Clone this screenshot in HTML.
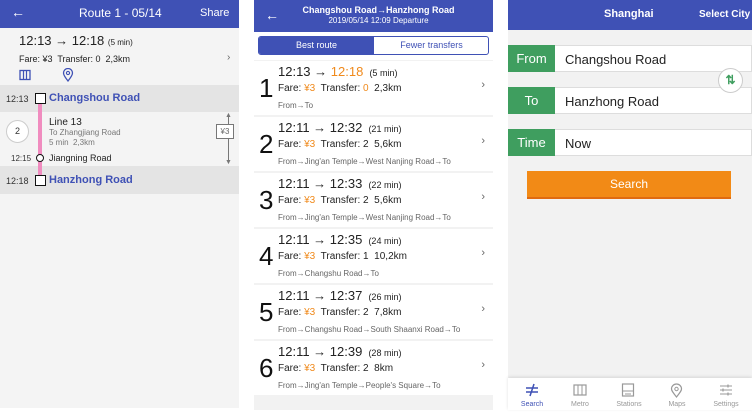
<!DOCTYPE html>
<html><head><meta charset="utf-8"><style>
*{margin:0;padding:0;box-sizing:border-box}
body{width:752px;height:414px;background:#fff;font-family:"Liberation Sans",sans-serif;position:relative;overflow:hidden;color:#222}
.a{position:absolute}
.hdr{background:#3f51b5;color:#fff}
.it{position:absolute;left:254px;width:239px;height:54px;background:#fff}
.it .n{position:absolute;left:5px;top:12px;font-size:26px;color:#111}
.it .t{position:absolute;left:24px;top:3px;font-size:13px;color:#222}
.it .t small{font-size:9px}
.it .f{position:absolute;left:24px;top:22px;font-size:10px}
.it .p{position:absolute;left:24px;top:40px;font-size:8px;color:#666}
.it .c{position:absolute;right:8px;top:18px;font-size:11px;color:#666}
.o{color:#f08a1c}
.fld{position:absolute;left:508px;width:244px;height:27px;background:#fff;border:1px solid #ddd;border-left:none}
.fld .lb{position:absolute;left:0;top:-1px;width:47px;height:27px;background:#3f9e5f;color:#fff;font-size:13px;text-align:center;line-height:27px}
.fld .v{position:absolute;left:57px;top:6px;font-size:13px}
.nav{position:absolute;top:401px;font-size:7px;color:#999;text-align:center;width:48px}
</style></head><body>
<!-- LEFT -->
<div class="a" style="left:0;top:0;width:239px;height:408px;background:#f4f4f4"></div>
<div class="a hdr" style="left:0;top:0;width:239px;height:28px"></div>
<div class="a" style="left:11px;top:4px;color:#fff;font-size:14px">←</div>
<div class="a" style="left:79px;top:6px;color:#fff;font-size:12px">Route 1 - 05/14</div>
<div class="a" style="left:200px;top:7px;color:#fff;font-size:11px">Share</div>
<div class="a" style="left:19px;top:33px;font-size:13px">12:13 → 12:18 <span style="font-size:8px">(5 min)</span></div>
<div class="a" style="left:19px;top:54px;font-size:9px">Fare: ¥3&nbsp; Transfer: 0&nbsp; 2,3km</div>
<div class="a" style="left:227px;top:52px;font-size:10px;color:#666">›</div>
<svg class="a" style="left:19px;top:69px" width="12" height="12" viewBox="0 0 12 12"><rect x="1" y="1.5" width="10" height="9" fill="none" stroke="#3f51b5" stroke-width="1.3"/><path d="M4.5 1.5v9M7.5 1.5v9" stroke="#3f51b5" stroke-width="1.2"/></svg>
<svg class="a" style="left:62px;top:68px" width="12" height="14" viewBox="0 0 12 14"><path d="M6 13C2 8 1.5 6.5 1.5 5a4.5 4.5 0 0 1 9 0c0 1.5-.5 3-4.5 8z" fill="none" stroke="#3f51b5" stroke-width="1.3"/><circle cx="6" cy="5" r="1.6" fill="none" stroke="#3f51b5" stroke-width="1.1"/></svg>
<div class="a" style="left:0;top:85px;width:239px;height:27px;background:#e4e4e4"></div>
<div class="a" style="left:0;top:166px;width:239px;height:28px;background:#e4e4e4"></div>
<div class="a" style="left:38px;top:99px;width:4px;height:82px;background:#f08cbf"></div>
<div class="a" style="left:6px;top:94px;font-size:9px;color:#333">12:13</div>
<div class="a" style="left:35px;top:93px;width:11px;height:11px;border:1.5px solid #111;background:#fff"></div>
<div class="a" style="left:49px;top:92px;font-size:11px;font-weight:bold;color:#3f51b5">Changshou Road</div>
<div class="a" style="left:6px;top:120px;width:23px;height:23px;border-radius:50%;border:1px solid #ccc;background:#fff;font-size:9px;text-align:center;line-height:21px;color:#333">2</div>
<div class="a" style="left:49px;top:117px;font-size:10px">Line 13</div>
<div class="a" style="left:49px;top:128px;font-size:8px;color:#777">To Zhangjiang Road</div>
<div class="a" style="left:49px;top:138px;font-size:8px;color:#777">5 min&nbsp; 2,3km</div>
<div class="a" style="left:11px;top:154px;font-size:8px;color:#333">12:15</div>
<div class="a" style="left:36px;top:154px;width:8px;height:8px;border-radius:50%;border:1.5px solid #111;background:#fff"></div>
<div class="a" style="left:49px;top:153px;font-size:9px">Jiangning Road</div>
<div class="a" style="left:6px;top:176px;font-size:9px;color:#333">12:18</div>
<div class="a" style="left:35px;top:175px;width:11px;height:11px;border:1.5px solid #111;background:#fff"></div>
<div class="a" style="left:49px;top:174px;font-size:11px;font-weight:bold;color:#3f51b5">Hanzhong Road</div>
<div class="a" style="left:228px;top:116px;width:1px;height:46px;background:#777"></div>
<div class="a" style="left:225px;top:112px;font-size:7px;color:#777">▲</div>
<div class="a" style="left:225px;top:159px;font-size:7px;color:#777">▼</div>
<div class="a" style="left:216px;top:124px;width:18px;height:15px;border:1px solid #777;background:#fff;font-size:8px;color:#666;text-align:center;line-height:13px">¥3</div>

<!-- MIDDLE -->
<div class="a" style="left:254px;top:0;width:239px;height:410px;background:#f2f2f2"></div>
<div class="a hdr" style="left:254px;top:0;width:239px;height:32px"></div>
<div class="a" style="left:265px;top:7px;color:#fff;font-size:14px">←</div>
<div class="a" style="left:254px;width:239px;top:5px;color:#fff;font-size:9px;text-align:center;padding-left:10px;font-weight:bold">Changshou Road→Hanzhong Road</div>
<div class="a" style="left:254px;width:239px;top:16px;color:#fff;font-size:8px;text-align:center;padding-left:10px">2019/05/14 12:09 Departure</div>
<div class="a" style="left:254px;top:32px;width:239px;height:28px;background:#fff"></div>
<div class="a" style="left:258px;top:36px;width:231px;height:19px;border:1.5px solid #3f51b5;border-radius:3px;background:#fff;overflow:hidden">
<div class="a" style="left:0;top:0;width:115px;height:17px;background:#3f51b5;color:#fff;font-size:9px;text-align:center;line-height:17px">Best route</div>
<div class="a" style="left:115px;top:0;width:115px;height:17px;color:#3f51b5;font-size:9px;text-align:center;line-height:17px">Fewer transfers</div></div>

<div class="it" style="top:61px"><div class="n">1</div><div class="t">12:13 → <span class="o">12:18</span> <small>&nbsp;(5 min)</small></div><div class="f">Fare: <span class="o">¥3</span>&nbsp; Transfer: <span class="o">0</span>&nbsp; 2,3km</div><div class="p">From→To</div><div class="c">›</div></div>
<div class="it" style="top:117px"><div class="n">2</div><div class="t">12:11 → 12:32 <small>&nbsp;(21 min)</small></div><div class="f">Fare: <span class="o">¥3</span>&nbsp; Transfer: 2&nbsp; 5,6km</div><div class="p">From→Jing'an Temple→West Nanjing Road→To</div><div class="c">›</div></div>
<div class="it" style="top:173px"><div class="n">3</div><div class="t">12:11 → 12:33 <small>&nbsp;(22 min)</small></div><div class="f">Fare: <span class="o">¥3</span>&nbsp; Transfer: 2&nbsp; 5,6km</div><div class="p">From→Jing'an Temple→West Nanjing Road→To</div><div class="c">›</div></div>
<div class="it" style="top:229px"><div class="n">4</div><div class="t">12:11 → 12:35 <small>&nbsp;(24 min)</small></div><div class="f">Fare: <span class="o">¥3</span>&nbsp; Transfer: 1&nbsp; 10,2km</div><div class="p">From→Changshu Road→To</div><div class="c">›</div></div>
<div class="it" style="top:285px"><div class="n">5</div><div class="t">12:11 → 12:37 <small>&nbsp;(26 min)</small></div><div class="f">Fare: <span class="o">¥3</span>&nbsp; Transfer: 2&nbsp; 7,8km</div><div class="p">From→Changshu Road→South Shaanxi Road→To</div><div class="c">›</div></div>
<div class="it" style="top:341px"><div class="n">6</div><div class="t">12:11 → 12:39 <small>&nbsp;(28 min)</small></div><div class="f">Fare: <span class="o">¥3</span>&nbsp; Transfer: 2&nbsp; 8km</div><div class="p">From→Jing'an Temple→People's Square→To</div><div class="c">›</div></div>

<!-- RIGHT -->
<div class="a" style="left:508px;top:0;width:244px;height:410px;background:#f2f2f2"></div>
<div class="a hdr" style="left:508px;top:0;width:244px;height:30px"></div>
<div class="a" style="left:604px;top:8px;color:#fff;font-size:11px;font-weight:bold">Shanghai</div>
<div class="a" style="left:699px;top:9px;color:#fff;font-size:10px;font-weight:bold">Select City</div>
<div class="fld" style="top:45px"><div class="lb">From</div><div class="v">Changshou Road</div></div>
<div class="fld" style="top:87px"><div class="lb">To</div><div class="v">Hanzhong Road</div></div>
<div class="fld" style="top:129px"><div class="lb">Time</div><div class="v">Now</div></div>
<div class="a" style="left:718px;top:68px;width:25px;height:25px;border-radius:50%;background:#fff;border:1px solid #ccc;color:#3f9e5f;font-size:12px;font-weight:bold;text-align:center;line-height:23px">⇅</div>
<div class="a" style="left:527px;top:171px;width:204px;height:28px;background:#f28a16;border-bottom:2px solid #e06a10;color:#fff;font-size:12px;text-align:center;line-height:27px">Search</div>
<div class="a" style="left:508px;top:378px;width:244px;height:32px;background:#fff;box-shadow:0 -1px 3px rgba(0,0,0,.12)"></div>
<svg class="a" style="left:524px;top:383px" width="16" height="14" viewBox="0 0 16 14"><path d="M2 5h12M2 9h12M10 1L6 13" stroke="#3f51b5" stroke-width="1.5" fill="none"/></svg>
<svg class="a" style="left:573px;top:384px" width="14" height="12"><rect x="1" y="1" width="12" height="10" fill="none" stroke="#999" stroke-width="1.2"/><path d="M5 1v10M9 1v10" stroke="#999"/></svg>
<svg class="a" style="left:621px;top:383px" width="14" height="14"><rect x="1.5" y="1" width="11" height="12" fill="none" stroke="#999" stroke-width="1.2"/><path d="M1.5 8h11M4 11h6" stroke="#999"/></svg>
<svg class="a" style="left:670px;top:383px" width="13" height="15"><path d="M6.5 14C2.5 9 1.5 7.5 1.5 6a5 5 0 0 1 10 0c0 1.5-1 3-5 8z" fill="none" stroke="#999" stroke-width="1.2"/><circle cx="6.5" cy="6" r="1.7" fill="none" stroke="#999"/></svg>
<svg class="a" style="left:719px;top:384px" width="14" height="12"><path d="M1 2h12M1 6h12M1 10h12" stroke="#999" stroke-width="1.1"/><path d="M9 0.5v3M4 4.5v3M9 8.5v3" stroke="#999" stroke-width="1.2"/></svg>
<div class="nav" style="left:508px;color:#3f51b5">Search</div>
<div class="nav" style="left:556px">Metro</div>
<div class="nav" style="left:605px">Stations</div>
<div class="nav" style="left:653px">Maps</div>
<div class="nav" style="left:702px">Settings</div>
</body></html>
